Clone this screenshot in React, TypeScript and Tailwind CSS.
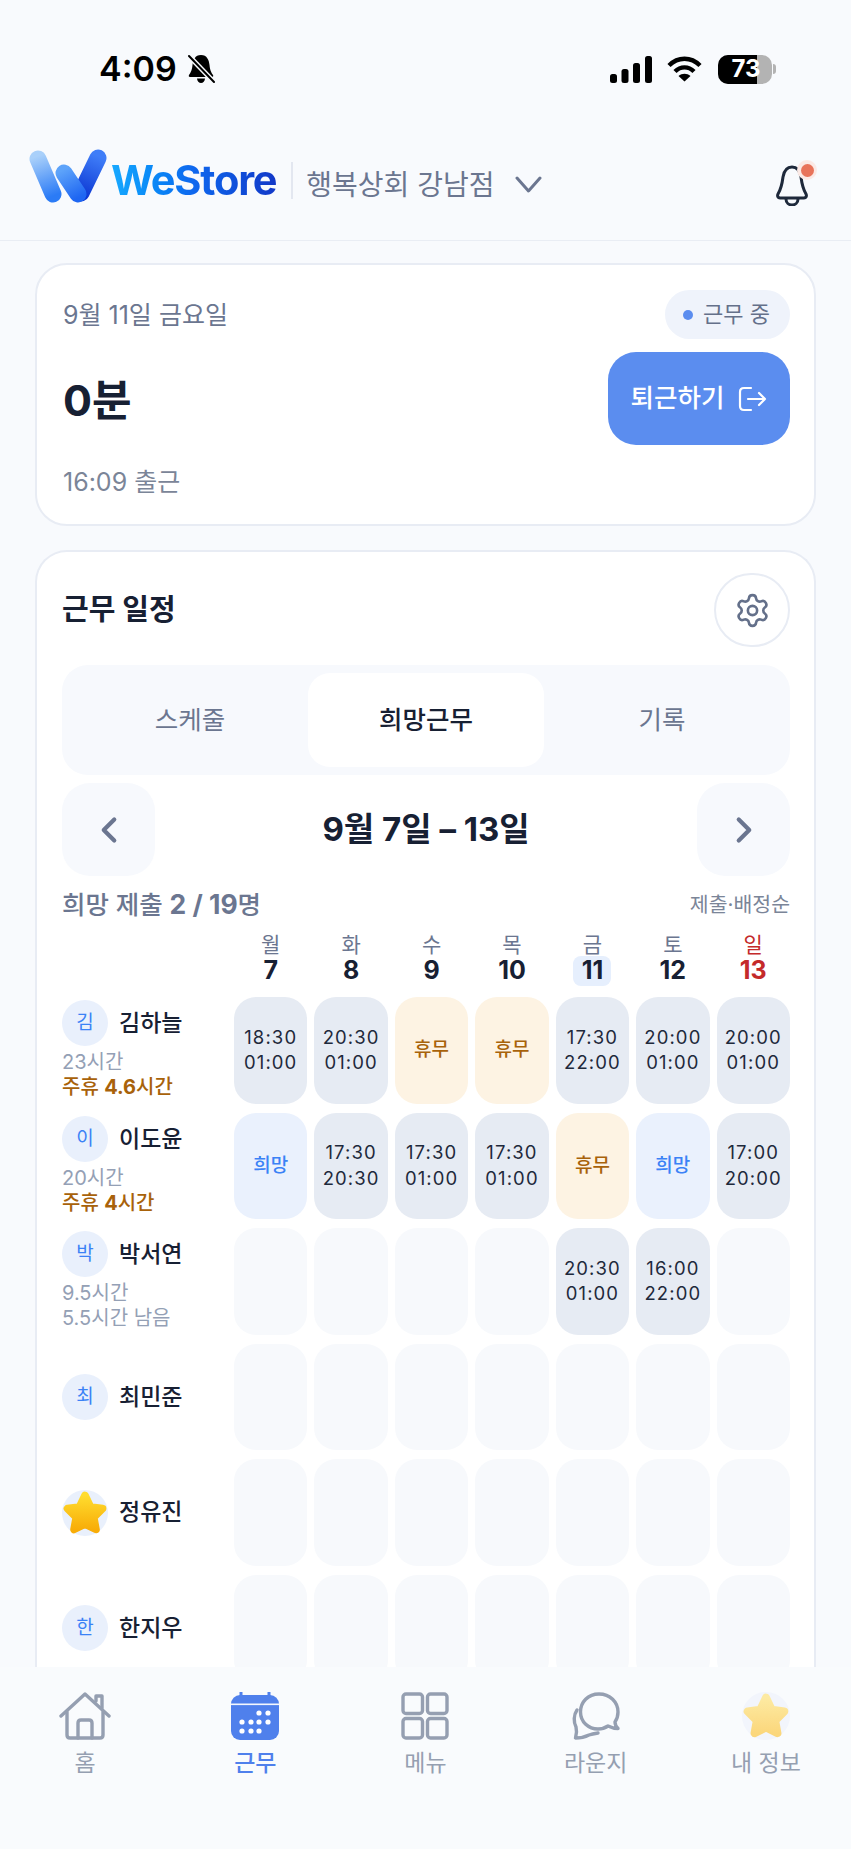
import React from 'react';
import { ChevronLeft, ChevronRight, Settings } from 'lucide-react';

type Cell = { kind: 'time'; from: string; to: string } | { kind: 'off' } | { kind: 'wish' } | { kind: 'empty' };

const t = (from: string, to: string): Cell => ({ kind: 'time', from, to });
const off: Cell = { kind: 'off' };
const wish: Cell = { kind: 'wish' };
const none: Cell = { kind: 'empty' };

const days = [
  { label: '월', num: '7' },
  { label: '화', num: '8' },
  { label: '수', num: '9' },
  { label: '목', num: '10' },
  { label: '금', num: '11', today: true },
  { label: '토', num: '12' },
  { label: '일', num: '13', sunday: true },
];

const staff = [
  {
    name: '김하늘',
    hours: '23시간',
    note: <span className="text-[#a8620a] font-medium">주휴 <b className="font-bold">4.6</b>시간</span>,
    cells: [t('18:30', '01:00'), t('20:30', '01:00'), off, off, t('17:30', '22:00'), t('20:00', '01:00'), t('20:00', '01:00')],
  },
  {
    name: '이도윤',
    hours: '20시간',
    note: <span className="text-[#a8620a] font-medium">주휴 <b className="font-bold">4</b>시간</span>,
    cells: [wish, t('17:30', '20:30'), t('17:30', '01:00'), t('17:30', '01:00'), off, wish, t('17:00', '20:00')],
  },
  {
    name: '박서연',
    hours: '9.5시간',
    note: <span className="text-[#94a0b5]">5.5시간 남음</span>,
    cells: [none, none, none, none, t('20:30', '01:00'), t('16:00', '22:00'), none],
  },
  { name: '최민준', cells: [none, none, none, none, none, none, none] },
  { name: '정유진', star: true, cells: [none, none, none, none, none, none, none] },
  { name: '한지우', cells: [none, none, none, none, none, none, none] },
];

const Star = ({ id, size, pale }: { id: string; size: number; pale?: boolean }) => (
  <svg width={size} height={size} viewBox="0 0 42 42">
    <defs>
      <linearGradient id={id} x1="0" y1="0" x2="0" y2="1">
        <stop offset="0" stopColor={pale ? '#fdeaa2' : '#ffdc2e'} />
        <stop offset="1" stopColor={pale ? '#fbd77c' : '#f8ad08'} />
      </linearGradient>
    </defs>
    <path
      d="M21 5 L26 15.5 L37 17 L29 25 L31 36 L21 31 L11 36 L13 25 L5 17 L16 15.5 Z"
      fill={`url(#${id})`}
      stroke={`url(#${id})`}
      strokeWidth="7"
      strokeLinejoin="round"
    />
  </svg>
);

const Logo = () => (
  <svg width="80" height="56" viewBox="0 0 80 56" fill="none" strokeLinecap="round" strokeWidth="17">
    <defs>
      <linearGradient id="lgA" gradientUnits="userSpaceOnUse" x1="10" y1="8" x2="25" y2="48">
        <stop offset="0" stopColor="#a9d0fa" />
        <stop offset="1" stopColor="#2b7bf6" />
      </linearGradient>
      <linearGradient id="lgB" gradientUnits="userSpaceOnUse" x1="70" y1="8" x2="52" y2="48">
        <stop offset="0" stopColor="#3f7df8" />
        <stop offset="1" stopColor="#0b36d2" />
      </linearGradient>
      <linearGradient id="lgC" gradientUnits="userSpaceOnUse" x1="35" y1="22" x2="50" y2="50">
        <stop offset="0" stopColor="#5da3fa" />
        <stop offset="1" stopColor="#1e66f2" />
      </linearGradient>
    </defs>
    <line x1="10" y1="11" x2="25" y2="46" stroke="url(#lgA)" />
    <line x1="70" y1="10" x2="53" y2="45" stroke="url(#lgB)" />
    <line x1="36" y1="25" x2="50" y2="46" stroke="url(#lgC)" />
  </svg>
);

const StatusBar = () => (
  <div className="flex items-center justify-between pl-[99px] pr-[75px] pt-[54px] h-[84px] text-black">
    <div className="flex items-center gap-[10px]">
      <span className="text-[34px] leading-[30px] font-semibold">4:09</span>
      <svg width="28" height="30" viewBox="0 0 28 30">
        <path d="M14 1 C8 1 6 6 5.5 11 C5 16 4 18 2 21 C1.4 22 2 23 3 23 H25 C26 23 26.6 22 26 21 C24 18 23 16 22.5 11 C22 6 20 1 14 1Z" fill="#000" />
        <path d="M10 24.5 C10 27 12 29 14 29 C16 29 18 27 18 24.5Z" fill="#000" />
        <line x1="2" y1="2" x2="27" y2="28" stroke="#f8fafd" strokeWidth="5" />
        <line x1="2" y1="2" x2="27" y2="28" stroke="#000" strokeWidth="2" strokeLinecap="round" />
      </svg>
    </div>
    <div className="flex items-center">
      <svg width="42" height="27" viewBox="0 0 42 27" fill="#000">
        <rect x="0" y="18" width="7" height="9" rx="2.5" />
        <rect x="11.5" y="13" width="7" height="14" rx="2.5" />
        <rect x="23" y="7" width="7" height="20" rx="2.5" />
        <rect x="35" y="0" width="7" height="27" rx="2.5" />
      </svg>
      <svg className="ml-[15px]" width="35" height="26" viewBox="0 0 35 26" fill="none" stroke="#000" strokeWidth="4.4">
        <path d="M2 9.5 C11 0.5 24 0.5 33 9.5" />
        <path d="M8 15.5 C13.5 10 21.5 10 27 15.5" />
        <path d="M17.5 25.5 L11.5 20 C15 17 20 17 23.5 20 Z" fill="#000" stroke="none" />
      </svg>
      <div className="ml-[16px] relative flex h-[29px] w-[54px] overflow-hidden rounded-[10px] bg-[#b3b3b3]">
        <div className="h-full w-[39px] bg-black" />
        <span className="absolute inset-0 flex items-center justify-center pl-[2px] text-[24px] font-bold leading-none text-white">73</span>
      </div>
      <div className="ml-[1px] h-[10px] w-[3px] rounded-r-full bg-[#b3b3b3]" />
    </div>
  </div>
);

const Header = () => (
  <header className="flex h-[157px] items-start justify-between border-b border-[#e9edf4] pl-[28px] pr-[43px] pt-[64px]">
    <div className="flex items-center">
      <Logo />
      <span className="ml-[3px] mt-[8px] bg-gradient-to-r from-[#18a9ff] via-[#0f67ee] to-[#1238c8] bg-clip-text text-[41.5px] font-bold leading-[40px] tracking-[-1.2px] text-transparent">
        WeStore
      </span>
      <div className="ml-[15px] mt-[9px] h-[37px] w-[2px] bg-[#e3e7f0]" />
      <span className="ml-[13px] mt-[17px] text-[28px] leading-[38px] text-[#6b7690]">행복상회 강남점</span>
      <svg className="ml-[20px] mt-[17px]" width="27" height="17" viewBox="0 0 27 17" fill="none" stroke="#6b7690" strokeWidth="3" strokeLinecap="round" strokeLinejoin="round">
        <path d="M2 2 L13.5 15 L25 2" />
      </svg>
    </div>
    <div className="relative mt-[17px] h-[41px] w-[32px]">
      <svg width="32" height="41" viewBox="0 0 32 41" fill="none" stroke="#1e293b" strokeWidth="3" strokeLinecap="round" strokeLinejoin="round">
        <path d="M16 2 C10 2 8 6 7 12 C6 20 5 24 2 29 C1 31 2 33 4 33 H28 C30 33 31 31 30 29 C27 24 26 20 25 12 C24 6 22 2 16 2Z" />
        <path d="M10 34 C10 38 13 40 16 40 C19 40 22 38 22 34" />
      </svg>
      <div className="absolute -right-[9px] -top-[5px] flex h-[20px] w-[20px] items-center justify-center rounded-full bg-[#fbe9e5]">
        <div className="h-[13px] w-[13px] rounded-full bg-[#e8735a]" />
      </div>
    </div>
  </header>
);

const WorkCard = () => (
  <section className="h-[263px] rounded-[32px] border-2 border-[#e8ecf4] bg-white pl-[26px] pr-[24px] pt-[25px]">
    <div className="flex items-center justify-between">
      <span className="text-[25px] leading-[30px] text-[#6b7690]">9월 11일 금요일</span>
      <div className="flex h-[49px] items-center gap-[10px] rounded-full bg-[#eff3fb] pl-[18px] pr-[20px] text-[22px] text-[#64708a]">
        <span className="h-[10px] w-[10px] rounded-full bg-[#5b8def]" />
        근무 중
      </div>
    </div>
    <div className="mt-[13px] flex items-center justify-between">
      <span className="mt-[3px] text-[43px] font-bold leading-[56px] text-[#172033]">0분</span>
      <button className="flex h-[93px] w-[182px] items-center justify-center gap-[14px] rounded-[28px] bg-[#5b8def] text-[25.5px] font-medium text-white">
        퇴근하기
        <svg width="29" height="26" viewBox="0 0 29 26" fill="none" stroke="#fff" strokeWidth="2.2" strokeLinecap="round" strokeLinejoin="round">
          <path d="M13 2 H6 C3 2 2 3.5 2 6 V20 C2 22.5 3 24 6 24 H13" />
          <path d="M10 13 H27 M21 7 L27 13 L21 19" />
        </svg>
      </button>
    </div>
    <div className="mt-[22px] text-[25px] leading-[30px] text-[#7b8598]">16:09 출근</div>
  </section>
);

const ShiftCell = ({ cell }: { cell: Cell }) => {
  if (cell.kind === 'time') {
    return (
      <div className="flex h-[106.6px] flex-col items-center justify-center rounded-[22px] bg-[#e6ebf3] text-[18.5px] font-normal leading-[25.5px] tracking-[1.1px] text-[#1e293b]">
        <span>{cell.from}</span>
        <span>{cell.to}</span>
      </div>
    );
  }
  if (cell.kind === 'off') {
    return <div className="flex h-[106.6px] items-center justify-center rounded-[22px] bg-[#fdf3e3] text-[19px] font-medium text-[#a8620a]">휴무</div>;
  }
  if (cell.kind === 'wish') {
    return <div className="flex h-[106.6px] items-center justify-center rounded-[22px] bg-[#eaf1fd] text-[19px] font-medium text-[#3b82f6]">희망</div>;
  }
  return <div className="h-[106.6px] rounded-[22px] bg-[#f7f9fc]" />;
};

const ScheduleCard = () => (
  <section className="mt-[24px] rounded-t-[32px] border-2 border-b-0 border-[#e8ecf4] bg-white pb-[40px] pl-[25px] pr-[24px] pt-[21px]">
    <div className="flex h-[74px] items-center justify-between">
      <h2 className="text-[29px] font-bold text-[#172033]">근무 일정</h2>
      <button className="flex h-[74px] w-[76px] items-center justify-center rounded-full border-2 border-[#e8ecf4] bg-white">
        <Settings size={37} strokeWidth={1.7} className="text-[#64708a]" />
      </button>
    </div>

    <div className="mt-[18px] grid h-[110px] grid-cols-3 rounded-[26px] bg-[#f7f9fd] px-[10px] py-[8px] text-[25.5px] text-[#6b7690]">
      <div className="flex items-center justify-center">스케줄</div>
      <div className="flex items-center justify-center rounded-[22px] bg-white font-medium text-[#172033]">희망근무</div>
      <div className="flex items-center justify-center">기록</div>
    </div>

    <div className="mt-[8px] flex h-[93px] items-center justify-between">
      <button className="flex h-[93px] w-[93px] items-center justify-center rounded-[28px] bg-[#f7f9fd]">
        <ChevronLeft size={42} strokeWidth={2.4} className="text-[#6b7690]" />
      </button>
      <span className="text-[33px] font-bold text-[#172033]">9월 7일 – 13일</span>
      <button className="flex h-[93px] w-[93px] items-center justify-center rounded-[28px] bg-[#f7f9fd]">
        <ChevronRight size={42} strokeWidth={2.4} className="text-[#6b7690]" />
      </button>
    </div>

    <div className="mt-[14px] flex h-[30px] items-center justify-between">
      <span className="text-[25.5px] font-medium text-[#6b7690]">
        희망 제출 <b className="text-[26.5px] font-bold">2 / 19</b>명
      </span>
      <span className="text-[20.5px] text-[#7b8598]">제출·배정순</span>
    </div>

    <div className="mt-[12px] grid grid-cols-[165px_repeat(7,1fr)] gap-x-[7px]">
      <div />
      {days.map((d) => (
        <div key={d.num} className="flex flex-col items-center">
          <span className={`text-[21px] leading-[26px] ${d.sunday ? 'text-[#c42a2a]' : 'text-[#6b7690]'}`}>{d.label}</span>
          <span
            className={`flex h-[26px] items-center justify-center text-[25px] font-bold ${d.sunday ? 'text-[#c42a2a]' : 'text-[#172033]'} ${
              d.today ? 'w-[38px] rounded-[8px] bg-[#e6effd] shadow-[0_2px_0_#e6effd,0_-2px_0_#e6effd]' : ''
            }`}
          >
            {d.num}
          </span>
        </div>
      ))}
    </div>

    <div className="mt-[13px] grid grid-cols-[165px_repeat(7,1fr)] gap-x-[7px] gap-y-[9px]">
      {staff.map((s) => (
        <React.Fragment key={s.name}>
          <div className="flex flex-col justify-center">
            <div className="flex items-center gap-[11px]">
              {s.star ? (
                <div className="flex h-[46px] w-[46px] items-center justify-center rounded-full bg-[#e9f0fc]">
                  <Star id="starAvatar" size={50} />
                </div>
              ) : (
                <div className="flex h-[46px] w-[46px] items-center justify-center rounded-full bg-[#e9f0fc] text-[19px] text-[#3b82f6]">{s.name[0]}</div>
              )}
              <span className="text-[23px] font-medium text-[#172033]">{s.name}</span>
            </div>
            {s.hours && (
              <div className="mt-[4px] text-[20px] leading-[25px] text-[#94a0b5]">
                <div>{s.hours}</div>
                <div>{s.note}</div>
              </div>
            )}
          </div>
          {s.cells.map((c, i) => (
            <ShiftCell key={i} cell={c} />
          ))}
        </React.Fragment>
      ))}
    </div>
  </section>
);

const navIconProps = { fill: 'none', stroke: '#959fb1', strokeWidth: 3.4, strokeLinecap: 'round', strokeLinejoin: 'round' } as const;

const BottomNav = () => (
  <nav className="grid h-[182px] shrink-0 grid-cols-5 bg-[#f9fbfd] pt-[25px] text-[23px] text-[#959fb1]">
    <div className="flex flex-col items-center">
      <svg width="52" height="48" viewBox="0 0 52 48" {...navIconProps}>
        <path d="M2 24 L26 2 L50 24" />
        <path d="M37 9 V4 H43 V16" />
        <path d="M8 20 V43 C8 45 9 46 11 46 H41 C43 46 44 45 44 43 V20" />
        <path d="M19 46 V31 C19 29 20 28 22 28 H30 C32 28 33 29 33 31 V46" />
      </svg>
      <span className="mt-[8px] leading-[30px]">홈</span>
    </div>
    <div className="flex flex-col items-center text-[#4f80ec]">
      <svg width="48" height="48" viewBox="0 0 48 48">
        <path d="M10 0 V6 M38 0 V6" stroke="#4f80ec" strokeWidth="3" strokeLinecap="round" />
        <rect x="0" y="3" width="48" height="45" rx="9" fill="#4f80ec" />
        <rect x="0" y="11.5" width="48" height="1.6" fill="#f4f7fd" />
        {[[28, 21], [37, 21], [11, 30], [20, 30], [28, 30], [37, 30], [11, 39], [20, 39], [28, 39]].map(([x, y]) => (
          <circle key={`${x}-${y}`} cx={x} cy={y} r="2.6" fill="#fff" />
        ))}
      </svg>
      <span className="mt-[8px] font-medium leading-[30px]">근무</span>
    </div>
    <div className="flex flex-col items-center">
      <svg width="48" height="48" viewBox="0 0 48 48" {...navIconProps}>
        <rect x="2" y="2" width="19.5" height="19.5" rx="3" />
        <rect x="26.5" y="2" width="19.5" height="19.5" rx="3" />
        <rect x="2" y="26.5" width="19.5" height="19.5" rx="3" />
        <rect x="26.5" y="26.5" width="19.5" height="19.5" rx="3" />
      </svg>
      <span className="mt-[8px] leading-[30px]">메뉴</span>
    </div>
    <div className="flex flex-col items-center">
      <svg width="48" height="48" viewBox="0 0 48 48" {...navIconProps}>
        <path d="M27 2 C16 2 8.5 10 8.5 20 C8.5 30 16.5 37 26 37 C30 37 33 36 36 34 C39 35.5 42 36.5 46 36.5 C44 34.5 43 32 43 30 C45 27 46 24 46 20 C46 10 38 2 27 2Z" />
        <path d="M5 18 C1.5 23 1.5 30 4 35 C5 39 4.5 43 3.5 46 C9 46 13 45 17 43 C20 42 23 41.5 26 41" />
      </svg>
      <span className="mt-[8px] leading-[30px]">라운지</span>
    </div>
    <div className="flex flex-col items-center">
      <div className="flex h-[48px] w-[48px] items-center justify-center rounded-full bg-[#f2f5fc]">
        <Star id="starNav" size={48} pale />
      </div>
      <span className="mt-[8px] leading-[30px]">내 정보</span>
    </div>
  </nav>
);

export default function App() {
  return (
    <div lang="ko" className="flex h-[1849px] w-[851px] flex-col overflow-hidden bg-[#f8fafd] font-[Inter,'Noto_Sans_CJK_KR',sans-serif]">
      <StatusBar />
      <Header />
      <main className="min-h-0 flex-1 overflow-hidden px-[35px] pt-[22px]">
        <WorkCard />
        <ScheduleCard />
      </main>
      <BottomNav />
    </div>
  );
}
